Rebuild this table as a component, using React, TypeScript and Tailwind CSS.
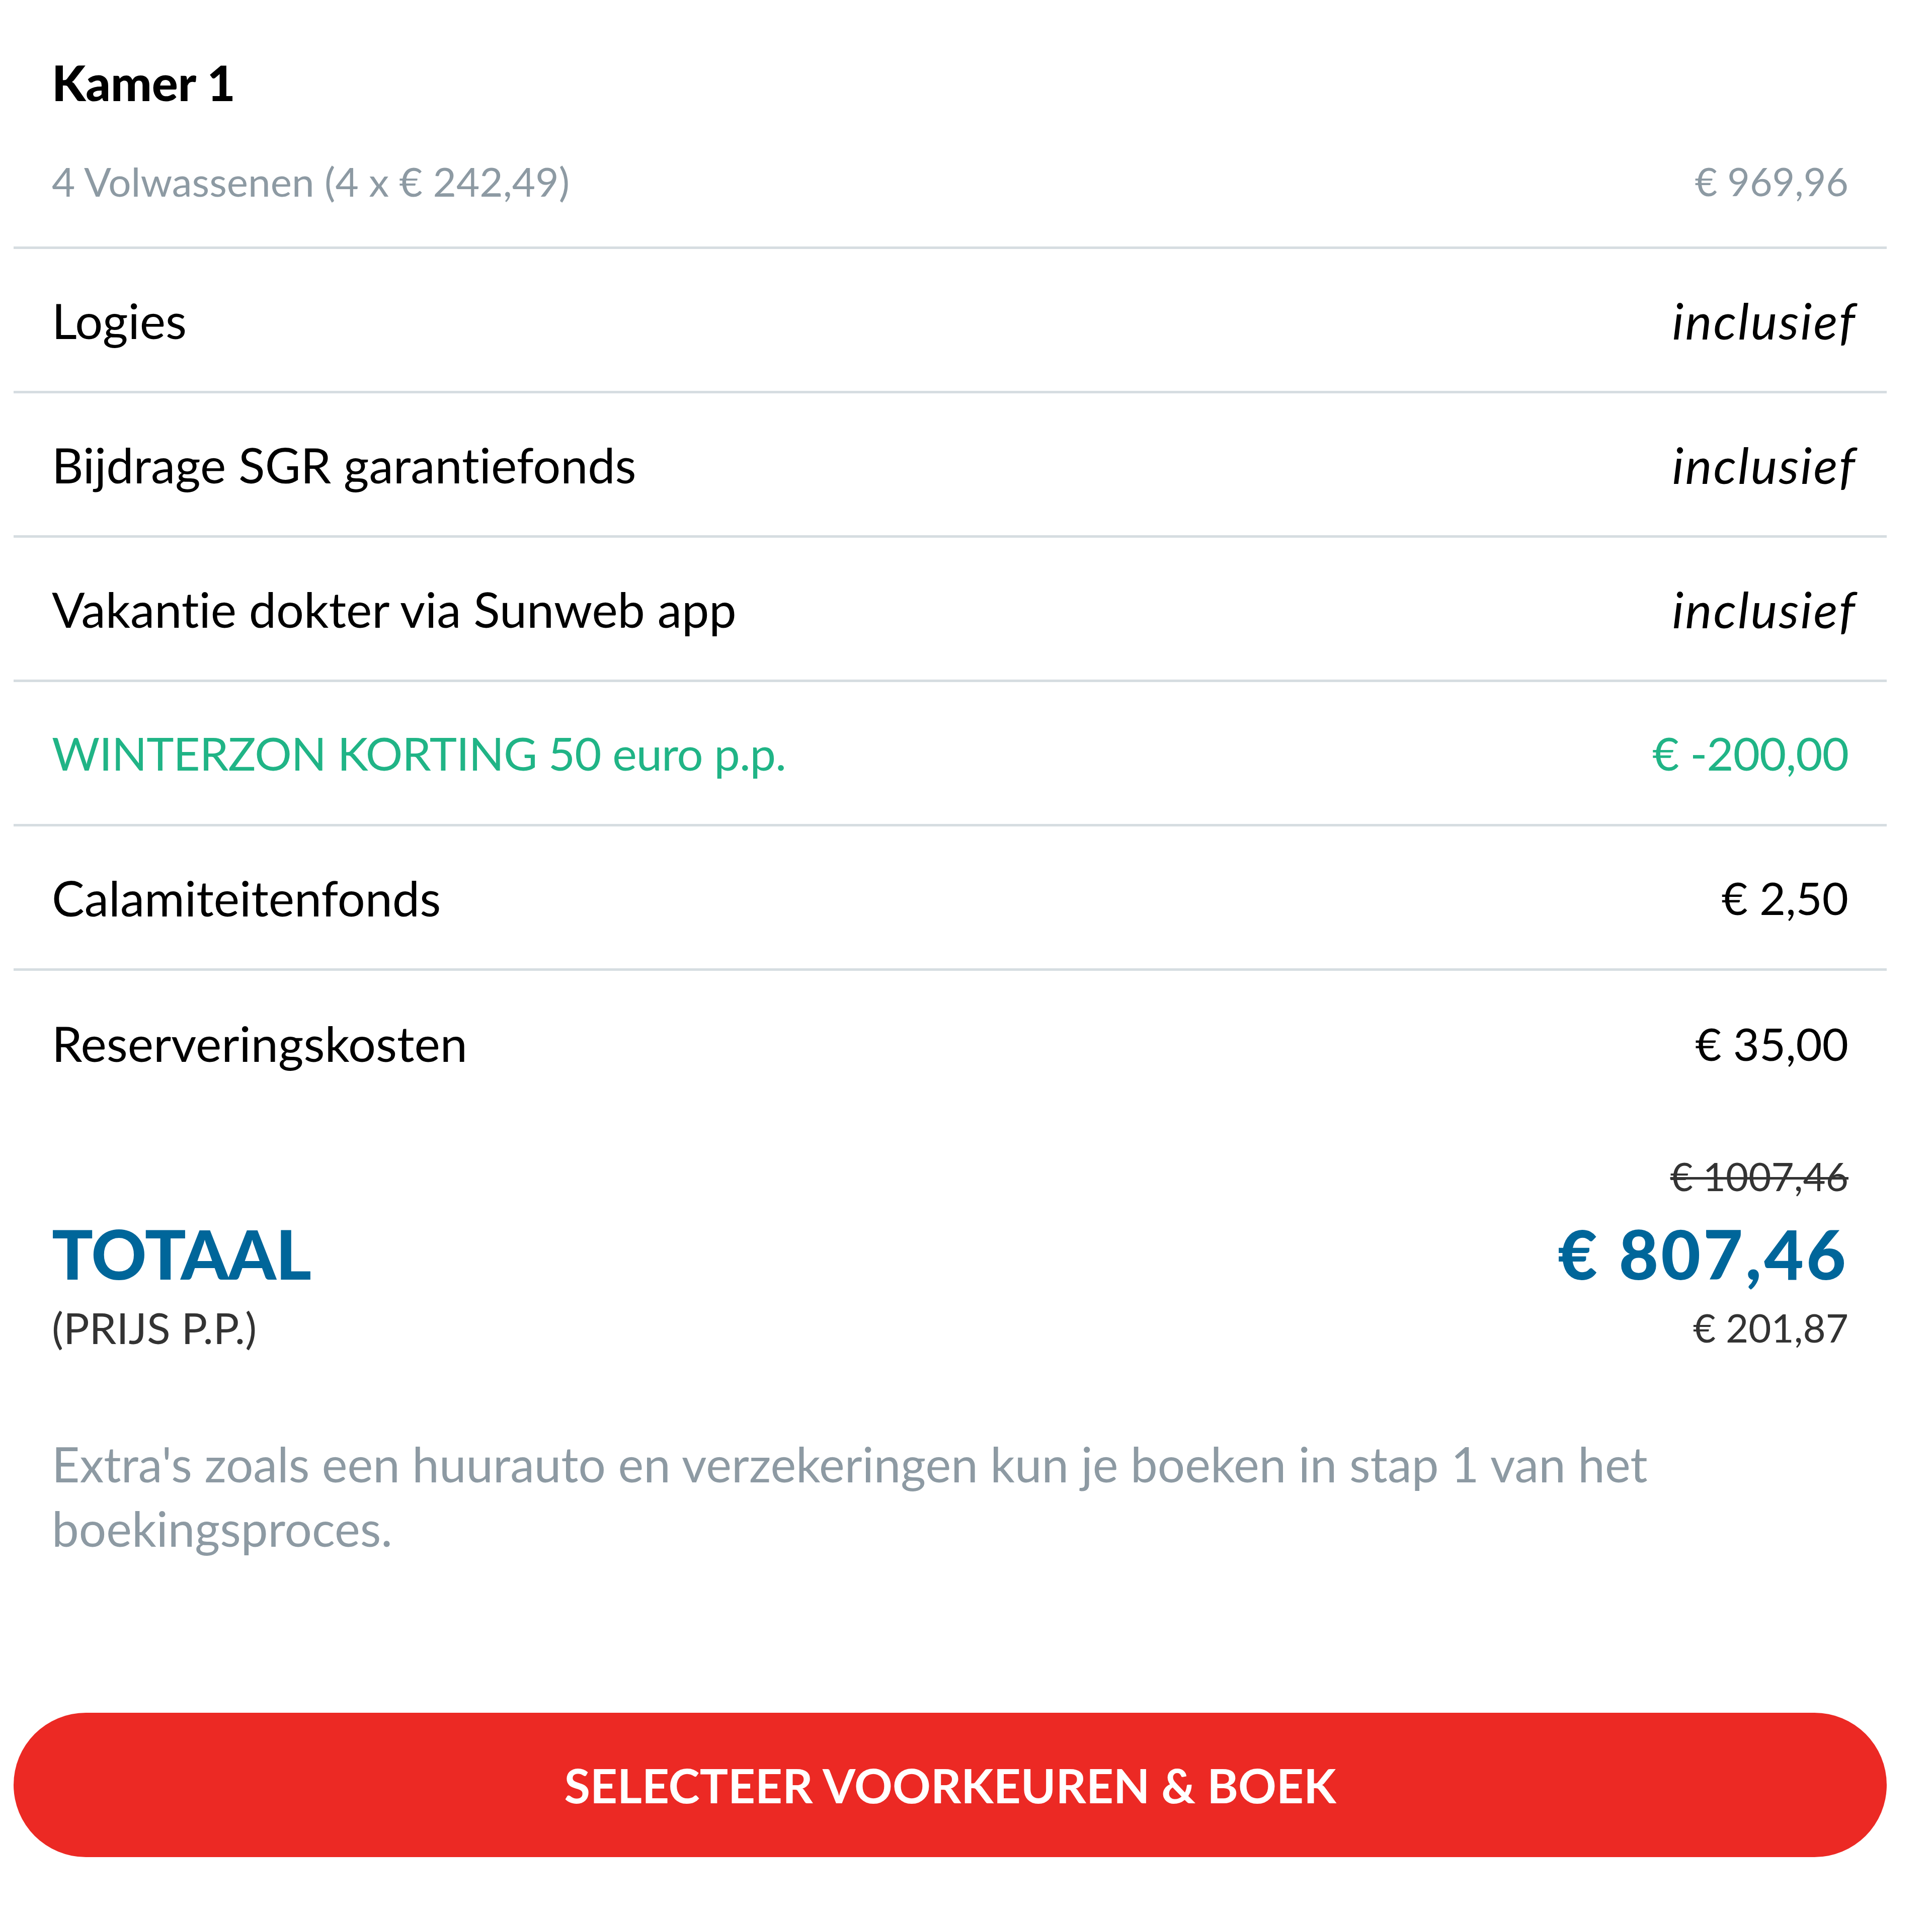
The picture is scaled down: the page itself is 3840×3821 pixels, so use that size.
import React from "react";

const font = { fontFamily: "Lato, 'Open Sans', sans-serif" };

function Row({
  label,
  value,
  italic,
  green,
  border = true,
}: {
  label: string;
  value: string;
  italic?: boolean;
  green?: boolean;
  border?: boolean;
}) {
  return (
    <div
      className={`flex h-[287px] items-center justify-between px-[76px] ${
        border ? "border-b-[5px] border-[#d6dde1]" : ""
      } ${green ? "text-[#20b486]" : "text-black"}`}
    >
      <span className={`${green ? "text-[92px] tracking-[-1px]" : "text-[97px]"} leading-none`}>{label}</span>
      <span
        className={`leading-none ${
          italic
            ? "-mr-[16px] text-[100px] italic tracking-[3px]"
            : green
            ? "text-[92px] tracking-[-1px]"
            : "text-[90px]"
        }`}
      >
        {value}
      </span>
    </div>
  );
}

export default function App() {
  return (
    <div className="h-[3821px] w-[3840px] bg-white">
      <div className="ml-[27px] w-[3723px] [font-variant-ligatures:none]" style={font}>
        <div className="border-b-[5px] border-[#d6dde1] px-[76px] pt-[99px] pb-[75px]">
          <div className="text-[97px] font-black leading-[130px] text-black">Kamer 1</div>
          <div className="mt-[76px] flex items-center justify-between leading-[110px] text-[#8d9aa3]">
            <span className="text-[80px]">4 Volwassenen (4 x € 242,49)</span>
            <span className="text-[77px]">€ 969,96</span>
          </div>
        </div>

        <Row label="Logies" value="inclusief" italic />
        <Row label="Bijdrage SGR garantiefonds" value="inclusief" italic />
        <Row label="Vakantie dokter via Sunweb app" value="inclusief" italic />
        <Row label="WINTERZON KORTING 50 euro p.p." value="€ -200,00" green />
        <Row label="Calamiteitenfonds" value="€ 2,50" />
        <Row label="Reserveringskosten" value="€ 35,00" border={false} />

        <div className="flex items-end justify-between px-[76px] pt-[66px]">
          <div className="flex flex-col">
            <span className="text-[136px] font-black leading-[150px] tracking-[-1px] text-[#00669a]">TOTAAL</span>
            <span className="mt-[17px] text-[86px] leading-[110px] text-[#333333]">(PRIJS P.P.)</span>
          </div>
          <div className="flex flex-col items-end">
            <span className="text-[78px] leading-[110px] text-[#333333] line-through decoration-[5px]">€ 1007,46</span>
            <span className="mt-[24px] text-[136px] font-black leading-[150px] tracking-[5px] text-[#00669a]">€ 807,46</span>
            <span className="mt-[17px] text-[78px] leading-[110px] text-[#333333]">€ 201,87</span>
          </div>
        </div>

        <p className="mt-[152px] px-[76px] text-[96px] leading-[128px] text-[#8d9aa3]">
          Extra's zoals een huurauto en verzekeringen kun je boeken in stap 1 van het boekingsproces.
        </p>

        <button className="mt-[303px] flex h-[287px] w-full items-center justify-center rounded-full bg-[#ec2924] text-[94px] font-bold uppercase text-white">
          Selecteer voorkeuren &amp; boek
        </button>
      </div>
    </div>
  );
}
